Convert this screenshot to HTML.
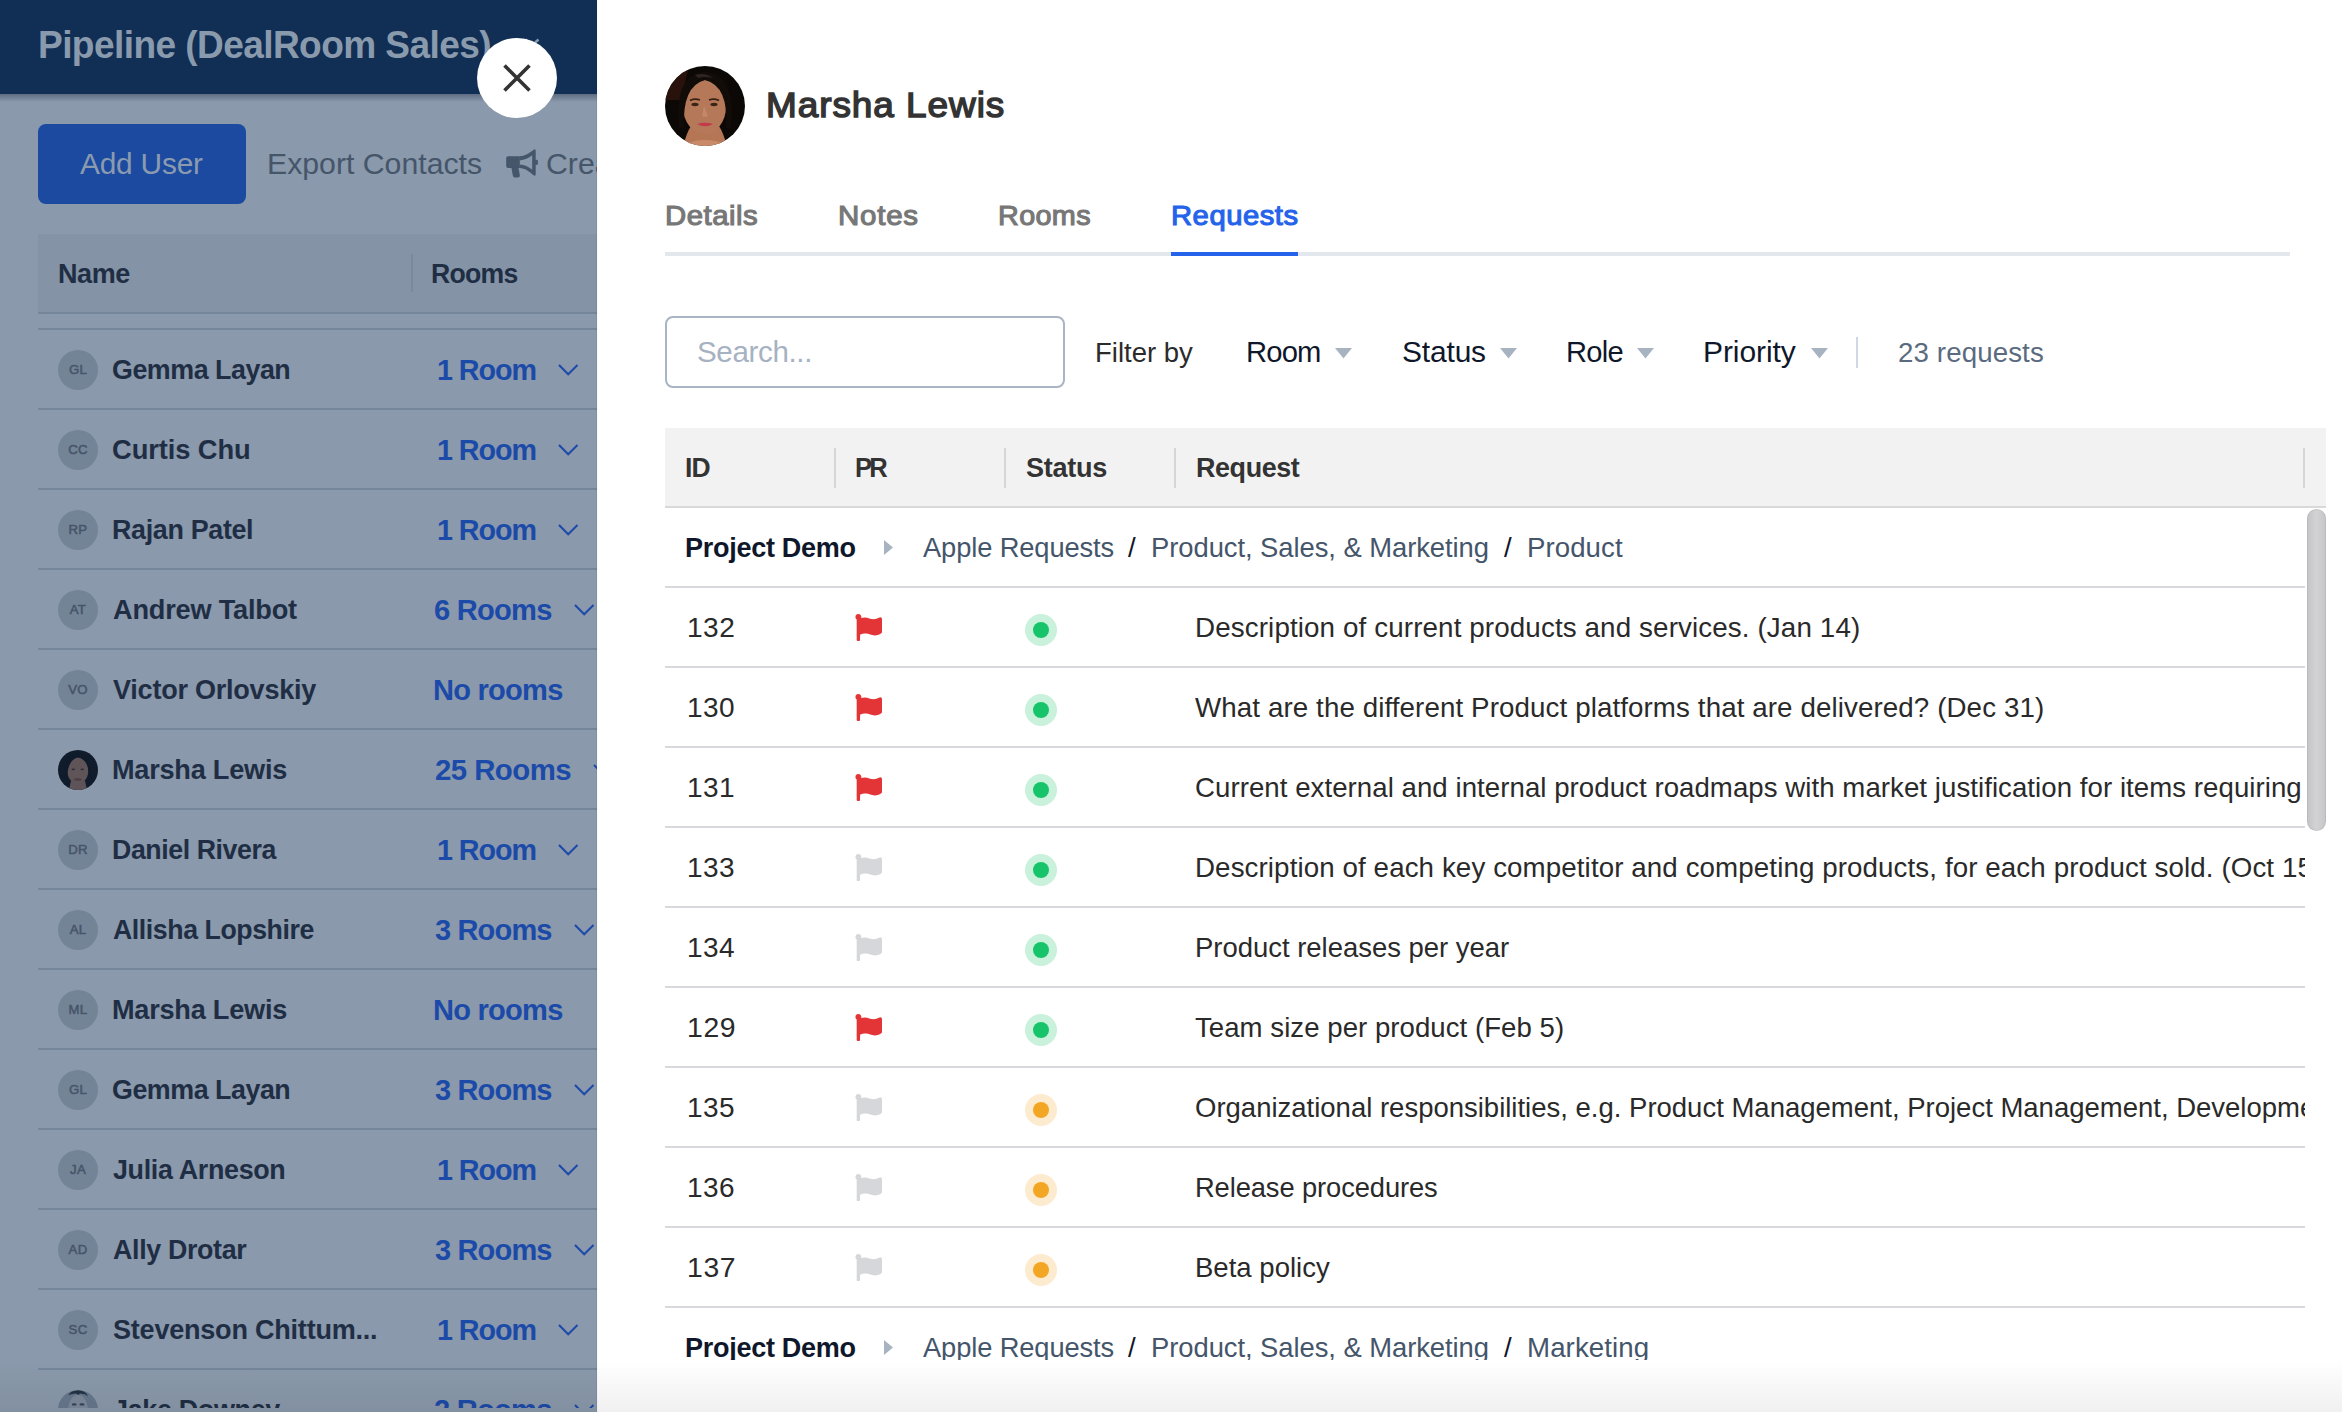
<!DOCTYPE html>
<html><head><meta charset="utf-8"><title>Marsha Lewis - Requests</title>
<style>
html,body{margin:0;padding:0}
body{width:2342px;height:1412px;overflow:hidden;position:relative;background:#fff;font-family:"Liberation Sans",sans-serif}
.t{position:absolute;white-space:pre;line-height:60px;font-family:"Liberation Sans",sans-serif}
.a{position:absolute}
svg{position:absolute;overflow:visible}
</style></head><body>

<div class="a" id="left" style="left:0;top:0;width:597px;height:1412px;background:#8a99ab;overflow:hidden">
<div class="a" style="left:0;top:0;width:597px;height:94px;background:#112e55"></div>
<div class="a" style="left:0;top:94px;width:597px;height:8px;background:linear-gradient(rgba(40,55,80,0.45),rgba(40,55,80,0))"></div>
<span class="t" style="left:38.06px;top:15.00px;font-size:38.2px;font-weight:700;color:#8a9aad;letter-spacing:-0.601px;transform:scaleX(0.9707);transform-origin:0 0">Pipeline (DealRoom Sales)</span>
<svg style="left:524px;top:38px" width="16" height="10"><polyline points="1.5,1.5 8,7.5 14.5,1.5" fill="none" stroke="#8a9aad" stroke-width="2.5"/></svg>
<div class="a" style="left:38px;top:124px;width:208px;height:80px;background:#1c4aa0;border-radius:8px"></div>
<span class="t" style="left:80.00px;top:134.00px;font-size:30.2px;font-weight:400;color:#8a9bb0;letter-spacing:-0.201px;transform:scaleX(0.9889);transform-origin:0 0">Add User</span>
<span class="t" style="left:267.00px;top:134.00px;font-size:30.2px;font-weight:400;color:#45556a;letter-spacing:0.012px;transform:scaleX(1.0008);transform-origin:0 0">Export Contacts</span>
<svg style="left:500px;top:140px" width="45" height="45" viewBox="0 0 45 45"><g fill="#45556a"><path d="M8.2 16.3 H19.8 V28 H8.2 a2 2 0 0 1 -2 -2 V18.3 a2 2 0 0 1 2 -2z"/><path fill-rule="evenodd" d="M19.6 16.3 C25 16.3 29.5 13.3 33.2 10.1 Q35.7 8.1 35.7 11.1 V34 Q35.7 37 33.2 35 C29.5 31.8 25 28 19.6 28z M19.6 20.4 C24.5 20.2 28.6 18 32.2 15.3 V29.7 C28.6 27 24.5 24.8 19.6 24.6z"/><rect x="35" y="19.8" width="2.9" height="5.1" rx="1.4"/><path d="M11.4 27.5 H18.4 L19.8 35 Q20.2 37.4 17.8 37.4 H15 Q13.1 37.4 12.8 35.5z"/></g></svg>
<div class="a" style="left:0;top:140px;width:597px;height:50px;overflow:hidden"><span class="t" style="left:546.00px;top:-140px;margin-top:134.00px;font-size:30.2px;font-weight:400;color:#45556a;letter-spacing:0.012px;transform:scaleX(1.0008);transform-origin:0 0">Create Campaign</span></div>
<div class="a" style="left:38px;top:234px;width:559px;height:78px;background:#8494a6"></div>
<div class="a" style="left:38px;top:312px;width:559px;height:2px;background:#75859a"></div>
<div class="a" style="left:411px;top:254px;width:2px;height:38px;background:#7a8a9e"></div>
<span class="t" style="left:58.02px;top:244.00px;font-size:27.5px;font-weight:700;color:#1f2e44;letter-spacing:-0.442px;transform:scaleX(0.9823);transform-origin:0 0">Name</span>
<span class="t" style="left:431.03px;top:244.00px;font-size:27.5px;font-weight:700;color:#1f2e44;letter-spacing:-0.763px;transform:scaleX(0.9679);transform-origin:0 0">Rooms</span>
<div class="a" style="left:38px;top:328px;width:559px;height:2px;background:#75859a"></div>
<div class="a" style="left:0;top:330px;width:597px;height:1078px;overflow:hidden">
<div class="a" style="left:58px;top:20.00px;width:40px;height:40px;border-radius:50%;background:#748497;color:#465569;font-size:13.2px;font-weight:400;-webkit-text-stroke:0.55px #465569;line-height:40px;text-align:center;letter-spacing:0.3px">GL</div>
<span class="t" style="left:112.02px;top:10.00px;font-size:27.5px;font-weight:700;color:#1f2e44;letter-spacing:-0.472px;transform:scaleX(0.9753);transform-origin:0 0">Gemma Layan</span>
<span class="t" style="left:436.75px;top:10.00px;font-size:30.2px;font-weight:700;color:#1c4aa8;letter-spacing:-1.110px;transform:scaleX(0.9511);transform-origin:0 0">1 Room</span>
<svg style="left:557.5px;top:34.00px" width="21" height="12"><polyline points="1,1 10.2,10.3 19.5,1" fill="none" stroke="#1c4aa8" stroke-width="2"/></svg>
<div class="a" style="left:38px;top:78.00px;width:559px;height:2px;background:#75859a"></div>
<div class="a" style="left:58px;top:100.00px;width:40px;height:40px;border-radius:50%;background:#748497;color:#465569;font-size:13.2px;font-weight:400;-webkit-text-stroke:0.55px #465569;line-height:40px;text-align:center;letter-spacing:0.3px">CC</div>
<span class="t" style="left:112.01px;top:90.00px;font-size:27.5px;font-weight:700;color:#1f2e44;letter-spacing:-0.098px;transform:scaleX(0.9936);transform-origin:0 0">Curtis Chu</span>
<span class="t" style="left:436.75px;top:90.00px;font-size:30.2px;font-weight:700;color:#1c4aa8;letter-spacing:-1.110px;transform:scaleX(0.9511);transform-origin:0 0">1 Room</span>
<svg style="left:557.5px;top:114.00px" width="21" height="12"><polyline points="1,1 10.2,10.3 19.5,1" fill="none" stroke="#1c4aa8" stroke-width="2"/></svg>
<div class="a" style="left:38px;top:158.00px;width:559px;height:2px;background:#75859a"></div>
<div class="a" style="left:58px;top:180.00px;width:40px;height:40px;border-radius:50%;background:#748497;color:#465569;font-size:13.2px;font-weight:400;-webkit-text-stroke:0.55px #465569;line-height:40px;text-align:center;letter-spacing:0.3px">RP</div>
<span class="t" style="left:112.02px;top:170.00px;font-size:27.5px;font-weight:700;color:#1f2e44;letter-spacing:-0.338px;transform:scaleX(0.9773);transform-origin:0 0">Rajan Patel</span>
<span class="t" style="left:436.75px;top:170.00px;font-size:30.2px;font-weight:700;color:#1c4aa8;letter-spacing:-1.110px;transform:scaleX(0.9511);transform-origin:0 0">1 Room</span>
<svg style="left:557.5px;top:194.00px" width="21" height="12"><polyline points="1,1 10.2,10.3 19.5,1" fill="none" stroke="#1c4aa8" stroke-width="2"/></svg>
<div class="a" style="left:38px;top:238.00px;width:559px;height:2px;background:#75859a"></div>
<div class="a" style="left:58px;top:260.00px;width:40px;height:40px;border-radius:50%;background:#748497;color:#465569;font-size:13.2px;font-weight:400;-webkit-text-stroke:0.55px #465569;line-height:40px;text-align:center;letter-spacing:0.3px">AT</div>
<span class="t" style="left:113.00px;top:250.00px;font-size:27.5px;font-weight:700;color:#1f2e44;letter-spacing:-0.201px;transform:scaleX(0.9874);transform-origin:0 0">Andrew Talbot</span>
<span class="t" style="left:434.04px;top:250.00px;font-size:30.2px;font-weight:700;color:#1c4aa8;letter-spacing:-0.778px;transform:scaleX(0.9642);transform-origin:0 0">6 Rooms</span>
<svg style="left:574.2px;top:274.00px" width="21" height="12"><polyline points="1,1 10.2,10.3 19.5,1" fill="none" stroke="#1c4aa8" stroke-width="2"/></svg>
<div class="a" style="left:38px;top:318.00px;width:559px;height:2px;background:#75859a"></div>
<div class="a" style="left:58px;top:340.00px;width:40px;height:40px;border-radius:50%;background:#748497;color:#465569;font-size:13.2px;font-weight:400;-webkit-text-stroke:0.55px #465569;line-height:40px;text-align:center;letter-spacing:0.3px">VO</div>
<span class="t" style="left:113.00px;top:330.00px;font-size:27.5px;font-weight:700;color:#1f2e44;letter-spacing:-0.242px;transform:scaleX(0.9831);transform-origin:0 0">Victor Orlovskiy</span>
<span class="t" style="left:433.08px;top:330.00px;font-size:30.2px;font-weight:700;color:#1c4aa8;letter-spacing:-0.779px;transform:scaleX(0.9620);transform-origin:0 0">No rooms</span>
<div class="a" style="left:38px;top:398.00px;width:559px;height:2px;background:#75859a"></div>
<svg style="left:58px;top:420.00px" width="40" height="40" viewBox="0 0 40 40"><defs><clipPath id="cp5"><circle cx="20" cy="20" r="20"/></clipPath></defs><g clip-path="url(#cp5)"><rect width="40" height="40" fill="#101b2c"/><path d="M11 40 L13 31 H27 L29 40z" fill="#5d5358"/><ellipse cx="19.8" cy="20.5" rx="10.5" ry="13.5" fill="#5f5558"/><path d="M7 30 Q5 4 20 3.5 Q35 4 33 30 L31 30 Q32 10 20 7.5 Q9 10 9 30z" fill="#0f1a2a"/><ellipse cx="15.3" cy="19.3" rx="1.8" ry="0.9" fill="#2a2e3c"/><ellipse cx="24.3" cy="19.3" rx="1.8" ry="0.9" fill="#2a2e3c"/><ellipse cx="19.8" cy="29.5" rx="4" ry="1.2" fill="#4d3c44"/></g></svg>
<span class="t" style="left:112.01px;top:410.00px;font-size:27.5px;font-weight:700;color:#1f2e44;letter-spacing:-0.233px;transform:scaleX(0.9859);transform-origin:0 0">Marsha Lewis</span>
<span class="t" style="left:434.63px;top:410.00px;font-size:30.2px;font-weight:700;color:#1c4aa8;letter-spacing:-0.564px;transform:scaleX(0.9730);transform-origin:0 0">25 Rooms</span>
<svg style="left:592.9px;top:434.00px" width="21" height="12"><polyline points="1,1 10.2,10.3 19.5,1" fill="none" stroke="#1c4aa8" stroke-width="2"/></svg>
<div class="a" style="left:38px;top:478.00px;width:559px;height:2px;background:#75859a"></div>
<div class="a" style="left:58px;top:500.00px;width:40px;height:40px;border-radius:50%;background:#748497;color:#465569;font-size:13.2px;font-weight:400;-webkit-text-stroke:0.55px #465569;line-height:40px;text-align:center;letter-spacing:0.3px">DR</div>
<span class="t" style="left:112.03px;top:490.00px;font-size:27.5px;font-weight:700;color:#1f2e44;letter-spacing:-0.427px;transform:scaleX(0.9714);transform-origin:0 0">Daniel Rivera</span>
<span class="t" style="left:436.75px;top:490.00px;font-size:30.2px;font-weight:700;color:#1c4aa8;letter-spacing:-1.110px;transform:scaleX(0.9511);transform-origin:0 0">1 Room</span>
<svg style="left:557.5px;top:514.00px" width="21" height="12"><polyline points="1,1 10.2,10.3 19.5,1" fill="none" stroke="#1c4aa8" stroke-width="2"/></svg>
<div class="a" style="left:38px;top:558.00px;width:559px;height:2px;background:#75859a"></div>
<div class="a" style="left:58px;top:580.00px;width:40px;height:40px;border-radius:50%;background:#748497;color:#465569;font-size:13.2px;font-weight:400;-webkit-text-stroke:0.55px #465569;line-height:40px;text-align:center;letter-spacing:0.3px">AL</div>
<span class="t" style="left:113.00px;top:570.00px;font-size:27.5px;font-weight:700;color:#1f2e44;letter-spacing:-0.434px;transform:scaleX(0.9704);transform-origin:0 0">Allisha Lopshire</span>
<span class="t" style="left:435.00px;top:570.00px;font-size:30.2px;font-weight:700;color:#1c4aa8;letter-spacing:-0.867px;transform:scaleX(0.9605);transform-origin:0 0">3 Rooms</span>
<svg style="left:574.2px;top:594.00px" width="21" height="12"><polyline points="1,1 10.2,10.3 19.5,1" fill="none" stroke="#1c4aa8" stroke-width="2"/></svg>
<div class="a" style="left:38px;top:638.00px;width:559px;height:2px;background:#75859a"></div>
<div class="a" style="left:58px;top:660.00px;width:40px;height:40px;border-radius:50%;background:#748497;color:#465569;font-size:13.2px;font-weight:400;-webkit-text-stroke:0.55px #465569;line-height:40px;text-align:center;letter-spacing:0.3px">ML</div>
<span class="t" style="left:112.01px;top:650.00px;font-size:27.5px;font-weight:700;color:#1f2e44;letter-spacing:-0.233px;transform:scaleX(0.9859);transform-origin:0 0">Marsha Lewis</span>
<span class="t" style="left:433.08px;top:650.00px;font-size:30.2px;font-weight:700;color:#1c4aa8;letter-spacing:-0.779px;transform:scaleX(0.9620);transform-origin:0 0">No rooms</span>
<div class="a" style="left:38px;top:718.00px;width:559px;height:2px;background:#75859a"></div>
<div class="a" style="left:58px;top:740.00px;width:40px;height:40px;border-radius:50%;background:#748497;color:#465569;font-size:13.2px;font-weight:400;-webkit-text-stroke:0.55px #465569;line-height:40px;text-align:center;letter-spacing:0.3px">GL</div>
<span class="t" style="left:112.02px;top:730.00px;font-size:27.5px;font-weight:700;color:#1f2e44;letter-spacing:-0.472px;transform:scaleX(0.9753);transform-origin:0 0">Gemma Layan</span>
<span class="t" style="left:435.00px;top:730.00px;font-size:30.2px;font-weight:700;color:#1c4aa8;letter-spacing:-0.867px;transform:scaleX(0.9605);transform-origin:0 0">3 Rooms</span>
<svg style="left:574.2px;top:754.00px" width="21" height="12"><polyline points="1,1 10.2,10.3 19.5,1" fill="none" stroke="#1c4aa8" stroke-width="2"/></svg>
<div class="a" style="left:38px;top:798.00px;width:559px;height:2px;background:#75859a"></div>
<div class="a" style="left:58px;top:820.00px;width:40px;height:40px;border-radius:50%;background:#748497;color:#465569;font-size:13.2px;font-weight:400;-webkit-text-stroke:0.55px #465569;line-height:40px;text-align:center;letter-spacing:0.3px">JA</div>
<span class="t" style="left:113.00px;top:810.00px;font-size:27.5px;font-weight:700;color:#1f2e44;letter-spacing:-0.343px;transform:scaleX(0.9778);transform-origin:0 0">Julia Arneson</span>
<span class="t" style="left:436.75px;top:810.00px;font-size:30.2px;font-weight:700;color:#1c4aa8;letter-spacing:-1.110px;transform:scaleX(0.9511);transform-origin:0 0">1 Room</span>
<svg style="left:557.5px;top:834.00px" width="21" height="12"><polyline points="1,1 10.2,10.3 19.5,1" fill="none" stroke="#1c4aa8" stroke-width="2"/></svg>
<div class="a" style="left:38px;top:878.00px;width:559px;height:2px;background:#75859a"></div>
<div class="a" style="left:58px;top:900.00px;width:40px;height:40px;border-radius:50%;background:#748497;color:#465569;font-size:13.2px;font-weight:400;-webkit-text-stroke:0.55px #465569;line-height:40px;text-align:center;letter-spacing:0.3px">AD</div>
<span class="t" style="left:113.00px;top:890.00px;font-size:27.5px;font-weight:700;color:#1f2e44;letter-spacing:-0.353px;transform:scaleX(0.9756);transform-origin:0 0">Ally Drotar</span>
<span class="t" style="left:435.00px;top:890.00px;font-size:30.2px;font-weight:700;color:#1c4aa8;letter-spacing:-0.867px;transform:scaleX(0.9605);transform-origin:0 0">3 Rooms</span>
<svg style="left:574.2px;top:914.00px" width="21" height="12"><polyline points="1,1 10.2,10.3 19.5,1" fill="none" stroke="#1c4aa8" stroke-width="2"/></svg>
<div class="a" style="left:38px;top:958.00px;width:559px;height:2px;background:#75859a"></div>
<div class="a" style="left:58px;top:980.00px;width:40px;height:40px;border-radius:50%;background:#748497;color:#465569;font-size:13.2px;font-weight:400;-webkit-text-stroke:0.55px #465569;line-height:40px;text-align:center;letter-spacing:0.3px">SC</div>
<span class="t" style="left:113.00px;top:970.00px;font-size:27.5px;font-weight:700;color:#1f2e44;letter-spacing:-0.237px;transform:scaleX(0.9837);transform-origin:0 0">Stevenson Chittum...</span>
<span class="t" style="left:436.75px;top:970.00px;font-size:30.2px;font-weight:700;color:#1c4aa8;letter-spacing:-1.110px;transform:scaleX(0.9511);transform-origin:0 0">1 Room</span>
<svg style="left:557.5px;top:994.00px" width="21" height="12"><polyline points="1,1 10.2,10.3 19.5,1" fill="none" stroke="#1c4aa8" stroke-width="2"/></svg>
<div class="a" style="left:38px;top:1038.00px;width:559px;height:2px;background:#75859a"></div>
<svg style="left:58px;top:1060.00px" width="40" height="40" viewBox="0 0 40 40"><defs><clipPath id="cp13"><circle cx="20" cy="20" r="20"/></clipPath></defs><g clip-path="url(#cp13)"><rect width="40" height="40" fill="#67788d"/><ellipse cx="20" cy="20" rx="10" ry="15" fill="#7c899b"/><path d="M10.5 5.5 Q12 0.5 20 0.3 Q28 0.5 30 6.5 Q26 3.5 25 4.2 Q22 2.5 20.5 5 Q18 2.5 15 4 Q12 4 10.5 5.5z" fill="#243247"/><ellipse cx="16.2" cy="14.4" rx="2.4" ry="1.2" fill="#34445a"/><ellipse cx="24" cy="14.4" rx="2.6" ry="1.2" fill="#34445a"/></g></svg>
<span class="t" style="left:113.00px;top:1050.00px;font-size:27.5px;font-weight:700;color:#1f2e44;letter-spacing:-0.355px;transform:scaleX(0.9801);transform-origin:0 0">Jake Downey</span>
<span class="t" style="left:434.04px;top:1050.00px;font-size:30.2px;font-weight:700;color:#1c4aa8;letter-spacing:-0.778px;transform:scaleX(0.9642);transform-origin:0 0">2 Rooms</span>
<svg style="left:574.2px;top:1074.00px" width="21" height="12"><polyline points="1,1 10.2,10.3 19.5,1" fill="none" stroke="#1c4aa8" stroke-width="2"/></svg>
</div>
</div>
<div class="a" style="left:597px;top:0;width:1745px;height:1412px;background:#fff"></div>
<div class="a" style="left:596px;top:0;width:2px;height:1412px;background:linear-gradient(90deg,rgba(20,40,70,0.10),rgba(20,40,70,0))"></div>
<svg style="left:665px;top:66px" width="80" height="80" viewBox="0 0 80 80"><defs><clipPath id="cpa"><circle cx="40" cy="40" r="40"/></clipPath></defs><g clip-path="url(#cpa)"><rect width="80" height="80" fill="#0c0806"/><path d="M0 0 H24 L16 34 H0z" fill="#28120b"/><path d="M18 80 Q22 66 26 60 H54 Q58 66 62 80z" fill="#b57656"/><ellipse cx="40" cy="84" rx="24" ry="10" fill="#c88a68"/><ellipse cx="39.5" cy="41" rx="21.5" ry="27" fill="#b57858"/><path d="M14 62 Q9 8 40 6 Q71 8 66 62 L61 62 Q64 20 40 14 Q17 20 19 62z" fill="#120c09"/><path d="M30 9 Q40 6 48 12 Q40 10 33 12z" fill="#2e2420"/><ellipse cx="30" cy="38.5" rx="3.6" ry="1.7" fill="#3a2418"/><ellipse cx="49" cy="38.5" rx="3.6" ry="1.7" fill="#3a2418"/><path d="M25 34.5 Q30 32 35 34" stroke="#3b2216" stroke-width="1.6" fill="none"/><path d="M44 34 Q49 32 54 34.5" stroke="#3b2216" stroke-width="1.6" fill="none"/><path d="M39 40 L37 50 Q40 52 43 50z" fill="#c28868"/><path d="M32 58 Q40 62.5 48 58 Q40 55.5 32 58z" fill="#c23a4c"/></g></svg>
<span class="t" style="left:765.64px;top:75.00px;font-size:35.3px;font-weight:400;color:#333333;letter-spacing:0.889px;transform:scaleX(1.0473);transform-origin:0 0;-webkit-text-stroke:1.41px #333333">Marsha Lewis</span>
<span class="t" style="left:664.91px;top:185.00px;font-size:28.3px;font-weight:400;color:#777777;letter-spacing:0.493px;transform:scaleX(1.0358);transform-origin:0 0;-webkit-text-stroke:1.13px #777777">Details</span>
<span class="t" style="left:837.51px;top:185.00px;font-size:28.3px;font-weight:400;color:#777777;letter-spacing:0.731px;transform:scaleX(1.0418);transform-origin:0 0;-webkit-text-stroke:1.13px #777777">Notes</span>
<span class="t" style="left:998.04px;top:185.00px;font-size:28.3px;font-weight:400;color:#777777;letter-spacing:0.355px;transform:scaleX(1.0163);transform-origin:0 0;-webkit-text-stroke:1.13px #777777">Rooms</span>
<span class="t" style="left:1170.52px;top:185.00px;font-size:28.3px;font-weight:400;color:#2563eb;letter-spacing:0.517px;transform:scaleX(1.0315);transform-origin:0 0;-webkit-text-stroke:1.13px #2563eb">Requests</span>
<div class="a" style="left:665px;top:252px;width:1625px;height:4px;background:#e3e7ee"></div>
<div class="a" style="left:1171px;top:252px;width:127px;height:4px;background:#2563eb"></div>
<div class="a" style="left:665px;top:316px;width:396px;height:68px;border:2px solid #a9b5c5;border-radius:8px;background:#fff"></div>
<span class="t" style="left:697.42px;top:322.00px;font-size:30.2px;font-weight:400;color:#a6b2c2;letter-spacing:-0.340px;transform:scaleX(0.9773);transform-origin:0 0">Search...</span>
<span class="t" style="left:1095.00px;top:323.00px;font-size:27.5px;font-weight:400;color:#2b2b2b;letter-spacing:-0.003px;transform:scaleX(0.9998);transform-origin:0 0">Filter by</span>
<span class="t" style="left:1246.07px;top:322.00px;font-size:30.2px;font-weight:400;color:#0f172a;letter-spacing:-0.875px;transform:scaleX(0.9672);transform-origin:0 0">Room</span>
<svg style="left:1335px;top:347.5px" width="17" height="11"><polygon points="0,0 17,0 8.5,10.5" fill="#a8b3c2"/></svg>
<span class="t" style="left:1402.01px;top:322.00px;font-size:30.2px;font-weight:400;color:#0f172a;letter-spacing:-0.150px;transform:scaleX(0.9911);transform-origin:0 0">Status</span>
<svg style="left:1500px;top:347.5px" width="17" height="11"><polygon points="0,0 17,0 8.5,10.5" fill="#a8b3c2"/></svg>
<span class="t" style="left:1566.07px;top:322.00px;font-size:30.2px;font-weight:400;color:#0f172a;letter-spacing:-0.743px;transform:scaleX(0.9638);transform-origin:0 0">Role</span>
<svg style="left:1637px;top:347.5px" width="17" height="11"><polygon points="0,0 17,0 8.5,10.5" fill="#a8b3c2"/></svg>
<span class="t" style="left:1703.01px;top:322.00px;font-size:30.2px;font-weight:400;color:#0f172a;letter-spacing:-0.088px;transform:scaleX(0.9934);transform-origin:0 0">Priority</span>
<svg style="left:1811px;top:347.5px" width="17" height="11"><polygon points="0,0 17,0 8.5,10.5" fill="#a8b3c2"/></svg>
<div class="a" style="left:1856px;top:337px;width:2px;height:31px;background:#d0d8e3"></div>
<span class="t" style="left:1898.39px;top:323.00px;font-size:27.5px;font-weight:400;color:#5a6b80;letter-spacing:0.102px;transform:scaleX(1.0072);transform-origin:0 0">23 requests</span>
<div class="a" style="left:665px;top:428px;width:1661px;height:78px;background:#f2f2f2"></div>
<div class="a" style="left:665px;top:506px;width:1661px;height:2px;background:#d9d9d9"></div>
<div class="a" style="left:834px;top:448px;width:2px;height:40px;background:#d6d6d6"></div>
<div class="a" style="left:1004px;top:448px;width:2px;height:40px;background:#d6d6d6"></div>
<div class="a" style="left:1174px;top:448px;width:2px;height:40px;background:#d6d6d6"></div>
<div class="a" style="left:2303px;top:448px;width:2px;height:40px;background:#d6d6d6"></div>
<span class="t" style="left:685.24px;top:438.00px;font-size:27.5px;font-weight:700;color:#333333;letter-spacing:-0.954px;transform:scaleX(0.9641);transform-origin:0 0">ID</span>
<span class="t" style="left:855.37px;top:438.00px;font-size:27.5px;font-weight:700;color:#333333;letter-spacing:-2.877px;transform:scaleX(0.9285);transform-origin:0 0">PR</span>
<span class="t" style="left:1026.10px;top:438.00px;font-size:27.5px;font-weight:700;color:#333333;letter-spacing:-0.269px;transform:scaleX(0.9842);transform-origin:0 0">Status</span>
<span class="t" style="left:1195.52px;top:438.00px;font-size:27.5px;font-weight:700;color:#333333;letter-spacing:-0.395px;transform:scaleX(0.9784);transform-origin:0 0">Request</span>
<div class="a" style="left:665px;top:508px;width:1640px;height:852px;overflow:hidden">
<span class="t" style="left:20.02px;top:10.00px;font-size:27.5px;font-weight:700;color:#0f172a;letter-spacing:-0.286px;transform:scaleX(0.9824);transform-origin:0 0">Project Demo</span>
<svg style="left:219.00px;top:31.50px" width="10" height="16"><polygon points="0,0 9,7.5 0,15" fill="#a8b3c2"/></svg>
<span class="t" style="left:257.60px;top:10.00px;font-size:27.5px;font-weight:400;color:#45556a;letter-spacing:-0.116px;transform:scaleX(0.9922);transform-origin:0 0">Apple Requests</span>
<span class="t" style="left:463.00px;top:10.00px;font-size:27.5px;font-weight:400;color:#0f172a;letter-spacing:0.000px">/</span>
<span class="t" style="left:485.91px;top:10.00px;font-size:27.5px;font-weight:400;color:#45556a;letter-spacing:-0.055px;transform:scaleX(0.9958);transform-origin:0 0">Product, Sales, &amp; Marketing</span>
<span class="t" style="left:839.00px;top:10.00px;font-size:27.5px;font-weight:400;color:#0f172a;letter-spacing:0.000px">/</span>
<span class="t" style="left:861.59px;top:10.00px;font-size:27.5px;font-weight:400;color:#45556a;letter-spacing:0.064px;transform:scaleX(1.0041);transform-origin:0 0">Product</span>
<span class="t" style="left:21.76px;top:90.00px;font-size:27.5px;font-weight:400;color:#2a2a2a;letter-spacing:0.443px;transform:scaleX(1.0213);transform-origin:0 0">132</span>
<svg style="left:190.00px;top:106.00px" width="27" height="27" viewBox="0 0 512 512"><path d="M349.565 98.783C295.978 98.783 251.721 64 184.348 64c-24.955 0-47.309 4.384-68.045 12.013a55.947 55.947 0 0 0 3.586-23.562C118.117 24.015 94.806 1.206 66.338.048 34.345-1.254 8 24.296 8 56c0 19.026 9.497 35.825 24 45.945V488c0 13.255 10.745 24 24 24h16c13.255 0 24-10.745 24-24v-94.4c28.311-12.064 63.582-22.122 114.435-22.122 53.588 0 97.844 34.783 165.217 34.783 48.169 0 86.667-16.294 122.505-40.858C506.84 359.452 512 349.571 512 339.045v-243.1c0-23.393-24.269-38.87-45.485-29.016-34.338 15.948-76.454 31.854-116.95 31.854z" fill="#e33437"/></svg>
<svg style="left:360.00px;top:106.00px" width="32" height="32"><circle cx="16" cy="16" r="16" fill="#c9f1dc"/><circle cx="16" cy="16" r="8" fill="#17c46a"/></svg>
<span class="t" style="left:529.98px;top:90.00px;font-size:27.5px;font-weight:400;color:#2a2a2a;letter-spacing:0.117px;transform:scaleX(1.0096);transform-origin:0 0">Description of current products and services. (Jan 14)</span>
<span class="t" style="left:21.76px;top:170.00px;font-size:27.5px;font-weight:400;color:#2a2a2a;letter-spacing:0.396px;transform:scaleX(1.0185);transform-origin:0 0">130</span>
<svg style="left:190.00px;top:186.00px" width="27" height="27" viewBox="0 0 512 512"><path d="M349.565 98.783C295.978 98.783 251.721 64 184.348 64c-24.955 0-47.309 4.384-68.045 12.013a55.947 55.947 0 0 0 3.586-23.562C118.117 24.015 94.806 1.206 66.338.048 34.345-1.254 8 24.296 8 56c0 19.026 9.497 35.825 24 45.945V488c0 13.255 10.745 24 24 24h16c13.255 0 24-10.745 24-24v-94.4c28.311-12.064 63.582-22.122 114.435-22.122 53.588 0 97.844 34.783 165.217 34.783 48.169 0 86.667-16.294 122.505-40.858C506.84 359.452 512 349.571 512 339.045v-243.1c0-23.393-24.269-38.87-45.485-29.016-34.338 15.948-76.454 31.854-116.95 31.854z" fill="#e33437"/></svg>
<svg style="left:360.00px;top:186.00px" width="32" height="32"><circle cx="16" cy="16" r="16" fill="#c9f1dc"/><circle cx="16" cy="16" r="8" fill="#17c46a"/></svg>
<span class="t" style="left:530.00px;top:170.00px;font-size:27.5px;font-weight:400;color:#2a2a2a;letter-spacing:0.099px;transform:scaleX(1.0081);transform-origin:0 0">What are the different Product platforms that are delivered? (Dec 31)</span>
<span class="t" style="left:21.76px;top:250.00px;font-size:27.5px;font-weight:400;color:#2a2a2a;letter-spacing:0.395px;transform:scaleX(1.0189);transform-origin:0 0">131</span>
<svg style="left:190.00px;top:266.00px" width="27" height="27" viewBox="0 0 512 512"><path d="M349.565 98.783C295.978 98.783 251.721 64 184.348 64c-24.955 0-47.309 4.384-68.045 12.013a55.947 55.947 0 0 0 3.586-23.562C118.117 24.015 94.806 1.206 66.338.048 34.345-1.254 8 24.296 8 56c0 19.026 9.497 35.825 24 45.945V488c0 13.255 10.745 24 24 24h16c13.255 0 24-10.745 24-24v-94.4c28.311-12.064 63.582-22.122 114.435-22.122 53.588 0 97.844 34.783 165.217 34.783 48.169 0 86.667-16.294 122.505-40.858C506.84 359.452 512 349.571 512 339.045v-243.1c0-23.393-24.269-38.87-45.485-29.016-34.338 15.948-76.454 31.854-116.95 31.854z" fill="#e33437"/></svg>
<svg style="left:360.00px;top:266.00px" width="32" height="32"><circle cx="16" cy="16" r="16" fill="#c9f1dc"/><circle cx="16" cy="16" r="8" fill="#17c46a"/></svg>
<span class="t" style="left:530.00px;top:250.00px;font-size:27.5px;font-weight:400;color:#2a2a2a;letter-spacing:0.051px;transform:scaleX(1.0042);transform-origin:0 0">Current external and internal product roadmaps with market justification for items requiring significant investment</span>
<span class="t" style="left:21.76px;top:330.00px;font-size:27.5px;font-weight:400;color:#2a2a2a;letter-spacing:0.396px;transform:scaleX(1.0185);transform-origin:0 0">133</span>
<svg style="left:190.00px;top:346.00px" width="27" height="27" viewBox="0 0 512 512"><path d="M349.565 98.783C295.978 98.783 251.721 64 184.348 64c-24.955 0-47.309 4.384-68.045 12.013a55.947 55.947 0 0 0 3.586-23.562C118.117 24.015 94.806 1.206 66.338.048 34.345-1.254 8 24.296 8 56c0 19.026 9.497 35.825 24 45.945V488c0 13.255 10.745 24 24 24h16c13.255 0 24-10.745 24-24v-94.4c28.311-12.064 63.582-22.122 114.435-22.122 53.588 0 97.844 34.783 165.217 34.783 48.169 0 86.667-16.294 122.505-40.858C506.84 359.452 512 349.571 512 339.045v-243.1c0-23.393-24.269-38.87-45.485-29.016-34.338 15.948-76.454 31.854-116.95 31.854z" fill="#d6d7da"/></svg>
<svg style="left:360.00px;top:346.00px" width="32" height="32"><circle cx="16" cy="16" r="16" fill="#c9f1dc"/><circle cx="16" cy="16" r="8" fill="#17c46a"/></svg>
<span class="t" style="left:529.98px;top:330.00px;font-size:27.5px;font-weight:400;color:#2a2a2a;letter-spacing:0.097px;transform:scaleX(1.0079);transform-origin:0 0">Description of each key competitor and competing products, for each product sold. (Oct 15)</span>
<span class="t" style="left:21.76px;top:410.00px;font-size:27.5px;font-weight:400;color:#2a2a2a;letter-spacing:0.396px;transform:scaleX(1.0185);transform-origin:0 0">134</span>
<svg style="left:190.00px;top:426.00px" width="27" height="27" viewBox="0 0 512 512"><path d="M349.565 98.783C295.978 98.783 251.721 64 184.348 64c-24.955 0-47.309 4.384-68.045 12.013a55.947 55.947 0 0 0 3.586-23.562C118.117 24.015 94.806 1.206 66.338.048 34.345-1.254 8 24.296 8 56c0 19.026 9.497 35.825 24 45.945V488c0 13.255 10.745 24 24 24h16c13.255 0 24-10.745 24-24v-94.4c28.311-12.064 63.582-22.122 114.435-22.122 53.588 0 97.844 34.783 165.217 34.783 48.169 0 86.667-16.294 122.505-40.858C506.84 359.452 512 349.571 512 339.045v-243.1c0-23.393-24.269-38.87-45.485-29.016-34.338 15.948-76.454 31.854-116.95 31.854z" fill="#d6d7da"/></svg>
<svg style="left:360.00px;top:426.00px" width="32" height="32"><circle cx="16" cy="16" r="16" fill="#c9f1dc"/><circle cx="16" cy="16" r="8" fill="#17c46a"/></svg>
<span class="t" style="left:530.00px;top:410.00px;font-size:27.5px;font-weight:400;color:#2a2a2a;letter-spacing:-0.015px;transform:scaleX(0.9988);transform-origin:0 0">Product releases per year</span>
<span class="t" style="left:21.74px;top:490.00px;font-size:27.5px;font-weight:400;color:#2a2a2a;letter-spacing:0.633px;transform:scaleX(1.0307);transform-origin:0 0">129</span>
<svg style="left:190.00px;top:506.00px" width="27" height="27" viewBox="0 0 512 512"><path d="M349.565 98.783C295.978 98.783 251.721 64 184.348 64c-24.955 0-47.309 4.384-68.045 12.013a55.947 55.947 0 0 0 3.586-23.562C118.117 24.015 94.806 1.206 66.338.048 34.345-1.254 8 24.296 8 56c0 19.026 9.497 35.825 24 45.945V488c0 13.255 10.745 24 24 24h16c13.255 0 24-10.745 24-24v-94.4c28.311-12.064 63.582-22.122 114.435-22.122 53.588 0 97.844 34.783 165.217 34.783 48.169 0 86.667-16.294 122.505-40.858C506.84 359.452 512 349.571 512 339.045v-243.1c0-23.393-24.269-38.87-45.485-29.016-34.338 15.948-76.454 31.854-116.95 31.854z" fill="#e33437"/></svg>
<svg style="left:360.00px;top:506.00px" width="32" height="32"><circle cx="16" cy="16" r="16" fill="#c9f1dc"/><circle cx="16" cy="16" r="8" fill="#17c46a"/></svg>
<span class="t" style="left:530.00px;top:490.00px;font-size:27.5px;font-weight:400;color:#2a2a2a;letter-spacing:0.042px;transform:scaleX(1.0032);transform-origin:0 0">Team size per product (Feb 5)</span>
<span class="t" style="left:21.76px;top:570.00px;font-size:27.5px;font-weight:400;color:#2a2a2a;letter-spacing:0.396px;transform:scaleX(1.0185);transform-origin:0 0">135</span>
<svg style="left:190.00px;top:586.00px" width="27" height="27" viewBox="0 0 512 512"><path d="M349.565 98.783C295.978 98.783 251.721 64 184.348 64c-24.955 0-47.309 4.384-68.045 12.013a55.947 55.947 0 0 0 3.586-23.562C118.117 24.015 94.806 1.206 66.338.048 34.345-1.254 8 24.296 8 56c0 19.026 9.497 35.825 24 45.945V488c0 13.255 10.745 24 24 24h16c13.255 0 24-10.745 24-24v-94.4c28.311-12.064 63.582-22.122 114.435-22.122 53.588 0 97.844 34.783 165.217 34.783 48.169 0 86.667-16.294 122.505-40.858C506.84 359.452 512 349.571 512 339.045v-243.1c0-23.393-24.269-38.87-45.485-29.016-34.338 15.948-76.454 31.854-116.95 31.854z" fill="#d6d7da"/></svg>
<svg style="left:360.00px;top:586.00px" width="32" height="32"><circle cx="16" cy="16" r="16" fill="#fdebd0"/><circle cx="16" cy="16" r="8" fill="#f2a624"/></svg>
<span class="t" style="left:530.00px;top:570.00px;font-size:27.5px;font-weight:400;color:#2a2a2a;letter-spacing:-0.001px;transform:scaleX(0.9999);transform-origin:0 0">Organizational responsibilities, e.g. Product Management, Project Management, Development</span>
<span class="t" style="left:21.76px;top:650.00px;font-size:27.5px;font-weight:400;color:#2a2a2a;letter-spacing:0.396px;transform:scaleX(1.0185);transform-origin:0 0">136</span>
<svg style="left:190.00px;top:666.00px" width="27" height="27" viewBox="0 0 512 512"><path d="M349.565 98.783C295.978 98.783 251.721 64 184.348 64c-24.955 0-47.309 4.384-68.045 12.013a55.947 55.947 0 0 0 3.586-23.562C118.117 24.015 94.806 1.206 66.338.048 34.345-1.254 8 24.296 8 56c0 19.026 9.497 35.825 24 45.945V488c0 13.255 10.745 24 24 24h16c13.255 0 24-10.745 24-24v-94.4c28.311-12.064 63.582-22.122 114.435-22.122 53.588 0 97.844 34.783 165.217 34.783 48.169 0 86.667-16.294 122.505-40.858C506.84 359.452 512 349.571 512 339.045v-243.1c0-23.393-24.269-38.87-45.485-29.016-34.338 15.948-76.454 31.854-116.95 31.854z" fill="#d6d7da"/></svg>
<svg style="left:360.00px;top:666.00px" width="32" height="32"><circle cx="16" cy="16" r="16" fill="#fdebd0"/><circle cx="16" cy="16" r="8" fill="#f2a624"/></svg>
<span class="t" style="left:530.01px;top:650.00px;font-size:27.5px;font-weight:400;color:#2a2a2a;letter-spacing:-0.100px;transform:scaleX(0.9931);transform-origin:0 0">Release procedures</span>
<span class="t" style="left:21.74px;top:730.00px;font-size:27.5px;font-weight:400;color:#2a2a2a;letter-spacing:0.633px;transform:scaleX(1.0307);transform-origin:0 0">137</span>
<svg style="left:190.00px;top:746.00px" width="27" height="27" viewBox="0 0 512 512"><path d="M349.565 98.783C295.978 98.783 251.721 64 184.348 64c-24.955 0-47.309 4.384-68.045 12.013a55.947 55.947 0 0 0 3.586-23.562C118.117 24.015 94.806 1.206 66.338.048 34.345-1.254 8 24.296 8 56c0 19.026 9.497 35.825 24 45.945V488c0 13.255 10.745 24 24 24h16c13.255 0 24-10.745 24-24v-94.4c28.311-12.064 63.582-22.122 114.435-22.122 53.588 0 97.844 34.783 165.217 34.783 48.169 0 86.667-16.294 122.505-40.858C506.84 359.452 512 349.571 512 339.045v-243.1c0-23.393-24.269-38.87-45.485-29.016-34.338 15.948-76.454 31.854-116.95 31.854z" fill="#d6d7da"/></svg>
<svg style="left:360.00px;top:746.00px" width="32" height="32"><circle cx="16" cy="16" r="16" fill="#fdebd0"/><circle cx="16" cy="16" r="8" fill="#f2a624"/></svg>
<span class="t" style="left:530.00px;top:730.00px;font-size:27.5px;font-weight:400;color:#2a2a2a;letter-spacing:0.012px;transform:scaleX(1.0009);transform-origin:0 0">Beta policy</span>
<div class="a" style="left:0.00px;top:78.00px;width:1640px;height:2px;background:#d8d9dc"></div>
<div class="a" style="left:0.00px;top:158.00px;width:1640px;height:2px;background:#d8d9dc"></div>
<div class="a" style="left:0.00px;top:238.00px;width:1640px;height:2px;background:#d8d9dc"></div>
<div class="a" style="left:0.00px;top:318.00px;width:1640px;height:2px;background:#d8d9dc"></div>
<div class="a" style="left:0.00px;top:398.00px;width:1640px;height:2px;background:#d8d9dc"></div>
<div class="a" style="left:0.00px;top:478.00px;width:1640px;height:2px;background:#d8d9dc"></div>
<div class="a" style="left:0.00px;top:558.00px;width:1640px;height:2px;background:#d8d9dc"></div>
<div class="a" style="left:0.00px;top:638.00px;width:1640px;height:2px;background:#d8d9dc"></div>
<div class="a" style="left:0.00px;top:718.00px;width:1640px;height:2px;background:#d8d9dc"></div>
<div class="a" style="left:0.00px;top:798.00px;width:1640px;height:2px;background:#d8d9dc"></div>
<span class="t" style="left:20.02px;top:810.00px;font-size:27.5px;font-weight:700;color:#0f172a;letter-spacing:-0.286px;transform:scaleX(0.9824);transform-origin:0 0">Project Demo</span>
<svg style="left:219.00px;top:831.50px" width="10" height="16"><polygon points="0,0 9,7.5 0,15" fill="#a8b3c2"/></svg>
<span class="t" style="left:257.60px;top:810.00px;font-size:27.5px;font-weight:400;color:#45556a;letter-spacing:-0.116px;transform:scaleX(0.9922);transform-origin:0 0">Apple Requests</span>
<span class="t" style="left:463.00px;top:810.00px;font-size:27.5px;font-weight:400;color:#0f172a;letter-spacing:0.000px">/</span>
<span class="t" style="left:485.91px;top:810.00px;font-size:27.5px;font-weight:400;color:#45556a;letter-spacing:-0.055px;transform:scaleX(0.9958);transform-origin:0 0">Product, Sales, &amp; Marketing</span>
<span class="t" style="left:839.00px;top:810.00px;font-size:27.5px;font-weight:400;color:#0f172a;letter-spacing:0.000px">/</span>
<span class="t" style="left:861.59px;top:810.00px;font-size:27.5px;font-weight:400;color:#45556a;letter-spacing:0.090px;transform:scaleX(1.0062);transform-origin:0 0">Marketing</span>
</div>
<div class="a" style="left:2307px;top:509px;width:19px;height:322px;border-radius:9.5px;background:linear-gradient(90deg,#c4c4c6,#d2d2d4 50%,#c6c6c8);box-shadow:inset 0 0 0 1px rgba(0,0,0,0.06)"></div>
<div class="a" style="left:477px;top:38px;width:80px;height:80px;border-radius:50%;background:#fff"></div>
<svg style="left:503px;top:64px" width="28" height="28"><path d="M1.5 1.5 L26.5 26.5 M26.5 1.5 L1.5 26.5" stroke="#333" stroke-width="3.6" stroke-linecap="butt"/></svg>
<div class="a" style="left:0;top:1360px;width:2342px;height:52px;background:linear-gradient(rgba(0,0,0,0),rgba(0,0,0,0.057))"></div>
</body></html>
